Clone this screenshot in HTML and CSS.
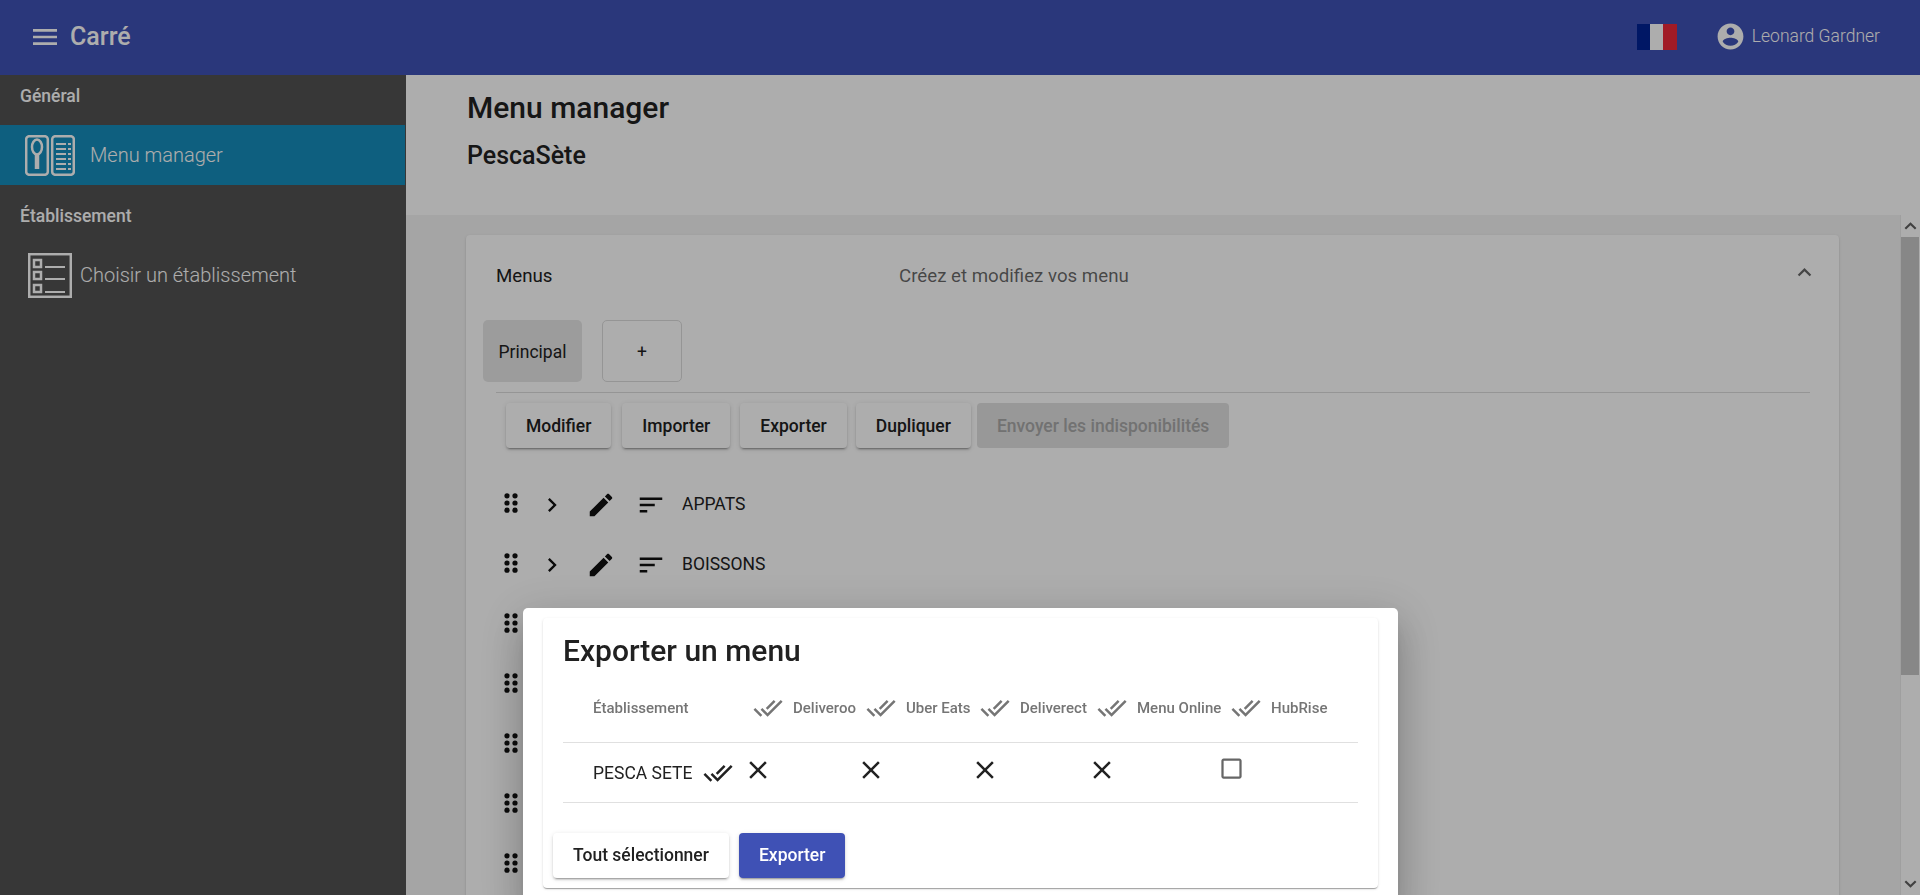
FILE: index.html
```html
<!DOCTYPE html>
<html lang="fr">
<head>
    <meta charset="UTF-8">
    <title>Menu manager</title>
    <link rel="stylesheet" href="styles.css">
</head>
<body>
    <header class="topbar">
        <div class="brand">
            <svg class="burger" viewBox="0 0 24 24"><path d="M3 18h18v-2H3v2zm0-5h18v-2H3v2zm0-7v2h18V6H3z"/></svg>
            <span class="brand-name">Carré</span>
        </div>
        <div class="user-area">
            <div class="flag"><span class="flag-blue"></span><span class="flag-white"></span><span class="flag-red"></span></div>
            <svg class="avatar" viewBox="0 0 24 24"><path d="M12 2C6.48 2 2 6.48 2 12s4.48 10 10 10 10-4.48 10-10S17.52 2 12 2zm0 3c1.66 0 3 1.34 3 3s-1.34 3-3 3-3-1.34-3-3 1.34-3 3-3zm0 14.2c-2.5 0-4.71-1.28-6-3.22.03-1.99 4-3.08 6-3.08 1.99 0 5.97 1.09 6 3.08-1.29 1.94-3.5 3.22-6 3.22z"/></svg>
            <span class="user-name">Leonard Gardner</span>
        </div>
    </header>

    <div class="layout">
        <nav class="sidebar">
            <div class="nav-title">Général</div>
            <a class="nav-item active">
                <svg class="nav-icon-menu" viewBox="0 0 50 41" fill="none" stroke="currentColor" stroke-width="2.5">
                    <rect x="1.2" y="1.2" width="21.6" height="38.6" rx="3"/>
                    <rect x="27.2" y="1.2" width="21.6" height="38.6" rx="3"/>
                    <ellipse cx="12" cy="12" rx="5" ry="7.5"/>
                    <path d="M12 19v15" stroke-width="4.5"/>
                    <path d="M31 9h10M31 14h10M31 19h10M31 24h10M31 29h10M31 34h10" stroke-width="2"/>
                    <path d="M43 9h3M43 14h3M43 19h3M43 24h3M43 29h3M43 34h3" stroke-width="2"/>
                </svg>
                <span>Menu manager</span>
            </a>
            <div class="nav-title">Établissement</div>
            <a class="nav-item pick">
                <svg class="nav-icon-list" viewBox="0 0 44 45" fill="none" stroke="currentColor" stroke-width="2.5">
                    <rect x="1.2" y="1.2" width="41.6" height="42.6"/>
                    <rect x="6" y="7" width="7" height="7"/>
                    <rect x="6" y="19" width="7" height="7"/>
                    <rect x="6" y="32" width="7" height="7"/>
                    <path d="M17 14h20M17 26h20M17 39h20" stroke-width="2"/>
                </svg>
                <span>Choisir un établissement</span>
            </a>
        </nav>

        <main class="content">
            <div class="page-head">
                <h1>Menu manager</h1>
                <h2>PescaSète</h2>
            </div>
            <div class="page-body">
                <div class="scroll-area">
                    <section class="card">
                        <div class="card-head">
                            <span class="card-title">Menus</span>
                            <span class="card-desc">Créez et modifiez vos menu</span>
                            <svg class="collapse" viewBox="0 0 24 24"><path d="M12 8l-6 6 1.41 1.41L12 10.83l4.59 4.58L18 14z"/></svg>
                        </div>
                        <div class="tabs">
                            <div class="tab selected">Principal</div>
                            <div class="tab add">+</div>
                        </div>
                        <hr class="divider">
                        <div class="actions">
                            <button class="btn">Modifier</button>
                            <button class="btn">Importer</button>
                            <button class="btn">Exporter</button>
                            <button class="btn">Dupliquer</button>
                            <button class="btn disabled">Envoyer les indisponibilités</button>
                        </div>
                        <div class="rows">
                            <div class="row">
                                <svg class="drag" viewBox="0 0 14 20"><circle cx="3" cy="2.8" r="2.6"/><circle cx="11" cy="2.8" r="2.6"/><circle cx="3" cy="10" r="2.6"/><circle cx="11" cy="10" r="2.6"/><circle cx="3" cy="17.2" r="2.6"/><circle cx="11" cy="17.2" r="2.6"/></svg>
                                <svg class="chevron" viewBox="0 0 24 24"><path d="M10 6L8.59 7.41 13.17 12l-4.58 4.59L10 18l6-6z"/></svg>
                                <svg class="pencil" viewBox="0 0 24 24"><path d="M3 17.25V21h3.75L17.81 9.94l-3.75-3.75L3 17.25zM20.71 7.04c.39-.39.39-1.02 0-1.41l-2.34-2.34c-.39-.39-1.02-.39-1.41 0l-1.83 1.83 3.75 3.75 1.83-1.83z"/></svg>
                                <svg class="sort" viewBox="0 0 24 24"><path d="M3 18h6v-2H3v2zM3 6v2h18V6H3zm0 7h12v-2H3v2z"/></svg>
                                <span class="row-label">APPATS</span>
                            </div>
                            <div class="row">
                                <svg class="drag" viewBox="0 0 14 20"><circle cx="3" cy="2.8" r="2.6"/><circle cx="11" cy="2.8" r="2.6"/><circle cx="3" cy="10" r="2.6"/><circle cx="11" cy="10" r="2.6"/><circle cx="3" cy="17.2" r="2.6"/><circle cx="11" cy="17.2" r="2.6"/></svg>
                                <svg class="chevron" viewBox="0 0 24 24"><path d="M10 6L8.59 7.41 13.17 12l-4.58 4.59L10 18l6-6z"/></svg>
                                <svg class="pencil" viewBox="0 0 24 24"><path d="M3 17.25V21h3.75L17.81 9.94l-3.75-3.75L3 17.25zM20.71 7.04c.39-.39.39-1.02 0-1.41l-2.34-2.34c-.39-.39-1.02-.39-1.41 0l-1.83 1.83 3.75 3.75 1.83-1.83z"/></svg>
                                <svg class="sort" viewBox="0 0 24 24"><path d="M3 18h6v-2H3v2zM3 6v2h18V6H3zm0 7h12v-2H3v2z"/></svg>
                                <span class="row-label">BOISSONS</span>
                            </div>
                            <div class="row"><svg class="drag" viewBox="0 0 14 20"><circle cx="3" cy="2.8" r="2.6"/><circle cx="11" cy="2.8" r="2.6"/><circle cx="3" cy="10" r="2.6"/><circle cx="11" cy="10" r="2.6"/><circle cx="3" cy="17.2" r="2.6"/><circle cx="11" cy="17.2" r="2.6"/></svg></div>
                            <div class="row"><svg class="drag" viewBox="0 0 14 20"><circle cx="3" cy="2.8" r="2.6"/><circle cx="11" cy="2.8" r="2.6"/><circle cx="3" cy="10" r="2.6"/><circle cx="11" cy="10" r="2.6"/><circle cx="3" cy="17.2" r="2.6"/><circle cx="11" cy="17.2" r="2.6"/></svg></div>
                            <div class="row"><svg class="drag" viewBox="0 0 14 20"><circle cx="3" cy="2.8" r="2.6"/><circle cx="11" cy="2.8" r="2.6"/><circle cx="3" cy="10" r="2.6"/><circle cx="11" cy="10" r="2.6"/><circle cx="3" cy="17.2" r="2.6"/><circle cx="11" cy="17.2" r="2.6"/></svg></div>
                            <div class="row"><svg class="drag" viewBox="0 0 14 20"><circle cx="3" cy="2.8" r="2.6"/><circle cx="11" cy="2.8" r="2.6"/><circle cx="3" cy="10" r="2.6"/><circle cx="11" cy="10" r="2.6"/><circle cx="3" cy="17.2" r="2.6"/><circle cx="11" cy="17.2" r="2.6"/></svg></div>
                            <div class="row"><svg class="drag" viewBox="0 0 14 20"><circle cx="3" cy="2.8" r="2.6"/><circle cx="11" cy="2.8" r="2.6"/><circle cx="3" cy="10" r="2.6"/><circle cx="11" cy="10" r="2.6"/><circle cx="3" cy="17.2" r="2.6"/><circle cx="11" cy="17.2" r="2.6"/></svg></div>
                        </div>
                    </section>
                </div>
                <div class="scrollbar">
                    <svg class="scroll-arrow" viewBox="0 0 12 8"><path d="M1.2 6.6L6 2l4.8 4.6" fill="none" stroke="currentColor" stroke-width="2"/></svg>
                    <div class="scroll-thumb"></div>
                    <div class="scroll-rest"></div>
                    <svg class="scroll-arrow" viewBox="0 0 12 8"><path d="M1.2 1.4L6 6l4.8-4.6" fill="none" stroke="currentColor" stroke-width="2"/></svg>
                </div>
            </div>
        </main>
    </div>

    <div class="backdrop"></div>

    <div class="modal">
        <div class="modal-card">
            <h3>Exporter un menu</h3>
            <table class="export-table">
                <thead>
                    <tr>
                        <th>Établissement</th>
                        <th><div class="th-in"><svg class="done-all" viewBox="0 0 24 24"><path d="M18 7l-1.41-1.41-6.34 6.34 1.41 1.41L18 7zm4.24-1.41L11.66 16.17 7.48 12l-1.41 1.41L11.66 19l12-12-1.42-1.41zM.41 13.41L6 19l1.41-1.41L1.83 12 .41 13.41z"/></svg>Deliveroo</div></th>
                        <th><div class="th-in"><svg class="done-all" viewBox="0 0 24 24"><path d="M18 7l-1.41-1.41-6.34 6.34 1.41 1.41L18 7zm4.24-1.41L11.66 16.17 7.48 12l-1.41 1.41L11.66 19l12-12-1.42-1.41zM.41 13.41L6 19l1.41-1.41L1.83 12 .41 13.41z"/></svg>Uber Eats</div></th>
                        <th><div class="th-in"><svg class="done-all" viewBox="0 0 24 24"><path d="M18 7l-1.41-1.41-6.34 6.34 1.41 1.41L18 7zm4.24-1.41L11.66 16.17 7.48 12l-1.41 1.41L11.66 19l12-12-1.42-1.41zM.41 13.41L6 19l1.41-1.41L1.83 12 .41 13.41z"/></svg>Deliverect</div></th>
                        <th><div class="th-in"><svg class="done-all" viewBox="0 0 24 24"><path d="M18 7l-1.41-1.41-6.34 6.34 1.41 1.41L18 7zm4.24-1.41L11.66 16.17 7.48 12l-1.41 1.41L11.66 19l12-12-1.42-1.41zM.41 13.41L6 19l1.41-1.41L1.83 12 .41 13.41z"/></svg>Menu Online</div></th>
                        <th><div class="th-in"><svg class="done-all" viewBox="0 0 24 24"><path d="M18 7l-1.41-1.41-6.34 6.34 1.41 1.41L18 7zm4.24-1.41L11.66 16.17 7.48 12l-1.41 1.41L11.66 19l12-12-1.42-1.41zM.41 13.41L6 19l1.41-1.41L1.83 12 .41 13.41z"/></svg>HubRise</div></th>
                    </tr>
                </thead>
                <tbody>
                    <tr>
                        <td><div class="place">PESCA SETE<svg class="done-all dark" viewBox="0 0 24 24"><path d="M18 7l-1.41-1.41-6.34 6.34 1.41 1.41L18 7zm4.24-1.41L11.66 16.17 7.48 12l-1.41 1.41L11.66 19l12-12-1.42-1.41zM.41 13.41L6 19l1.41-1.41L1.83 12 .41 13.41z"/></svg></div></td>
                        <td><svg class="cross" viewBox="0 0 24 24"><path d="M19 6.41L17.59 5 12 10.59 6.41 5 5 6.41 10.59 12 5 17.59 6.41 19 12 13.41 17.59 19 19 17.59 13.41 12z"/></svg></td>
                        <td><svg class="cross" viewBox="0 0 24 24"><path d="M19 6.41L17.59 5 12 10.59 6.41 5 5 6.41 10.59 12 5 17.59 6.41 19 12 13.41 17.59 19 19 17.59 13.41 12z"/></svg></td>
                        <td><svg class="cross" viewBox="0 0 24 24"><path d="M19 6.41L17.59 5 12 10.59 6.41 5 5 6.41 10.59 12 5 17.59 6.41 19 12 13.41 17.59 19 19 17.59 13.41 12z"/></svg></td>
                        <td><svg class="cross" viewBox="0 0 24 24"><path d="M19 6.41L17.59 5 12 10.59 6.41 5 5 6.41 10.59 12 5 17.59 6.41 19 12 13.41 17.59 19 19 17.59 13.41 12z"/></svg></td>
                        <td><svg class="checkbox" viewBox="0 0 24 24"><path d="M19 5v14H5V5h14m0-2H5c-1.1 0-2 .9-2 2v14c0 1.1.9 2 2 2h14c1.1 0 2-.9 2-2V5c0-1.1-.9-2-2-2z"/></svg></td>
                    </tr>
                </tbody>
            </table>
            <div class="modal-actions">
                <button class="btn light">Tout sélectionner</button>
                <button class="btn primary">Exporter</button>
            </div>
        </div>
    </div>
</body>
</html>
```

FILE: styles.css
```css
* {
    box-sizing: border-box;
}

html, body {
    height: 100%;
}

body {
    margin: 0;
    display: flex;
    flex-direction: column;
    overflow: hidden;
    font-family: Roboto, "Liberation Sans", sans-serif;
    color: #212121;
    background: #fff;
}

/* top bar */
.topbar {
    height: 75px;
    flex: none;
    display: flex;
    justify-content: space-between;
    align-items: center;
    padding: 0 40px 2px 29px;
    background: #3f51b5;
    color: #fff;
}

.brand, .user-area {
    display: flex;
    align-items: center;
}

.burger {
    width: 32px;
    height: 32px;
    fill: #fff;
}

.brand-name {
    margin-left: 9px;
    font-size: 25px;
    font-weight: 500;
}

.flag {
    display: flex;
    width: 40px;
    height: 26px;
    margin-right: 38px;
}

.flag span {
    flex: 1;
}

.flag-blue { background: #002395; }
.flag-white { background: #fff; }
.flag-red { background: #ed2939; }

.avatar {
    width: 31px;
    height: 31px;
    fill: #fff;
}

.user-name {
    margin: -1px 0 0 6px;
    font-size: 17.5px;
    font-weight: 300;
}

.layout {
    flex: 1;
    display: flex;
    min-height: 0;
}

/* side menu */
.sidebar {
    width: 406px;
    flex: none;
    padding-right: 1px;
    background: #525252;
    color: #fff;
}

.nav-title {
    height: 50px;
    padding: 9px 0 0 20px;
    font-size: 17.5px;
    font-weight: 500;
    line-height: 24px;
}

.nav-item {
    display: flex;
    align-items: center;
    height: 60px;
    margin-bottom: 10px;
    padding-left: 25px;
    font-size: 20px;
    font-weight: 300;
}

.nav-item.active {
    background: #168dbb;
}

.nav-item.pick {
    padding-left: 28px;
}

.nav-icon-menu {
    width: 50px;
    height: 41px;
    margin-right: 15px;
}

.nav-icon-list {
    width: 44px;
    height: 45px;
    margin-right: 8px;
}

/* main part */
.content {
    flex: 1;
    min-width: 0;
    display: flex;
    flex-direction: column;
}

.page-head {
    height: 140px;
    flex: none;
    padding: 14px 0 0 61px;
}

h1 {
    margin: 0;
    font-size: 30px;
    font-weight: 500;
    line-height: 38px;
}

h2 {
    margin: 13px 0 0;
    font-size: 25px;
    font-weight: 500;
    line-height: 32px;
}

.page-body {
    flex: 1;
    min-height: 0;
    display: flex;
    background: #f3f3f3;
}

.scroll-area {
    flex: 1;
    min-width: 0;
    padding: 20px 61px 0 60px;
    overflow: hidden;
}

.card {
    padding-bottom: 40px;
    background: #fff;
    border-radius: 4px;
    box-shadow: 0 2px 1px -1px rgba(0,0,0,.2), 0 1px 1px 0 rgba(0,0,0,.14), 0 1px 3px 0 rgba(0,0,0,.12);
}

.card-head {
    display: flex;
    align-items: center;
    height: 82px;
    padding: 0 21px 0 30px;
    font-size: 18.7px;
}

.card-title {
    width: 403px;
}

.card-desc {
    flex: 1;
    color: rgba(0,0,0,.6);
}

.collapse {
    width: 27px;
    height: 27px;
    margin-bottom: 8px;
    fill: rgba(0,0,0,.6);
}

.tabs {
    display: flex;
    gap: 20px;
    margin: 3px 0 0 17px;
}

.tab {
    display: flex;
    align-items: center;
    justify-content: center;
    height: 62px;
    padding-top: 2px;
    border-radius: 5px;
    font-size: 17.5px;
}

.tab.selected {
    width: 99px;
    background: #e6e6e6;
}

.tab.add {
    width: 80px;
    border: 1px solid #dcdcdc;
}

.divider {
    height: 1px;
    margin: 10px 29px 0 30px;
    border: 0;
    background: #dcdcdc;
}

.actions {
    display: flex;
    gap: 10px;
    margin: 10px 0 27px 40px;
}

.btn {
    height: 45px;
    padding: 0 20px;
    border: 0;
    border-radius: 4px;
    background: #fff;
    color: #212121;
    font-family: inherit;
    font-size: 17.5px;
    font-weight: 500;
    box-shadow: 0 3px 1px -2px rgba(0,0,0,.2), 0 2px 2px 0 rgba(0,0,0,.14), 0 1px 5px 0 rgba(0,0,0,.12);
}

.actions .btn:nth-child(2) {
    margin-left: 1px;
}

.actions .btn:nth-child(4) {
    margin-left: -1px;
}

.btn.disabled {
    margin-left: -4px;
    background: #e0e0e0;
    color: #a8a8a8;
    box-shadow: none;
}

.btn.primary {
    background: #3f51b5;
    color: #fff;
}

.row {
    display: flex;
    align-items: center;
    height: 60px;
    padding-left: 38px;
    fill: #111;
}

.drag {
    width: 14px;
    height: 20px;
    margin: -4px 24px 0 0;
}

.chevron {
    width: 20px;
    height: 30px;
    margin-right: 24px;
    transform: scale(1.4);
}

.pencil, .sort {
    width: 30px;
    height: 30px;
}

.pencil {
    margin-right: 20px;
}

.sort {
    margin-right: 16px;
}

.row-label {
    font-size: 17.5px;
    margin-top: -2px;
}

/* fake scrollbar */
.scrollbar {
    width: 20px;
    flex: none;
    display: flex;
    flex-direction: column;
    align-items: center;
    padding-right: 1px;
    background: #fff;
    border-left: 1px solid #ebebeb;
    color: #505050;
}

.scroll-arrow {
    width: 13px;
    height: 22px;
    flex: none;
    color: #606060;
}

.scroll-thumb {
    width: 100%;
    height: 438px;
    flex: none;
    background: #c8c8c8;
}

.scroll-rest {
    flex: 1;
}

/* dialog */
.backdrop {
    position: fixed;
    inset: 0;
    background: rgba(0,0,0,.32);
}

.modal {
    position: fixed;
    left: 523px;
    top: 608px;
    width: 875px;
    padding: 10px 20px 20px;
    background: #fff;
    border-radius: 5px;
    box-shadow: 0 11px 15px -7px rgba(0,0,0,.2), 0 24px 38px 3px rgba(0,0,0,.14), 0 9px 46px 8px rgba(0,0,0,.12);
}

.modal-card {
    height: 270px;
    padding: 12px 20px 0;
    border-radius: 4px;
    box-shadow: 0 2px 1px -1px rgba(0,0,0,.2), 0 1px 1px 0 rgba(0,0,0,.14), 0 1px 3px 0 rgba(0,0,0,.12);
}

h3 {
    margin: 0;
    font-size: 30px;
    font-weight: 500;
    line-height: 42px;
}

.export-table {
    width: 795px;
    margin-top: 10px;
    border-collapse: collapse;
    table-layout: fixed;
}

.export-table th:nth-child(1) { width: 180px; }
.export-table th:nth-child(2) { width: 113px; }
.export-table th:nth-child(3) { width: 114px; }
.export-table th:nth-child(4) { width: 117px; }
.export-table th:nth-child(5) { width: 131px; }
.export-table th:nth-child(6) { width: 140px; }

.export-table th {
    height: 60px;
    padding: 0 0 8px 10px;
    border-bottom: 1px solid #e0e0e0;
    color: #757575;
    font-size: 15px;
    font-weight: 500;
    text-align: left;
    white-space: nowrap;
}

.export-table th:first-child {
    padding-left: 30px;
}

.export-table th:last-child {
    padding-left: 13px;
}

.export-table td {
    height: 60px;
    padding: 0;
    border-bottom: 1px solid #e0e0e0;
    line-height: 0;
}

.export-table td:first-child {
    padding-left: 30px;
}

.th-in {
    display: flex;
    align-items: center;
    gap: 10px;
}

.place {
    display: flex;
    align-items: center;
    gap: 11px;
    padding-top: 2px;
    font-size: 17.5px;
    line-height: 24px;
}

.done-all {
    width: 30px;
    height: 30px;
    flex: none;
    fill: #757575;
}

.done-all.dark {
    fill: #212121;
}

.cross {
    width: 30px;
    height: 30px;
    margin-bottom: 4px;
    fill: #212121;
}

.checkbox {
    width: 27px;
    height: 27px;
    margin-bottom: 8px;
    fill: #666;
}

.modal-actions {
    display: flex;
    gap: 10px;
    margin: 30px 0 0 -10px;
}
```
